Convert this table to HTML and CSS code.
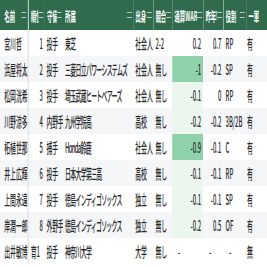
FILE: index.html
```html
<!DOCTYPE html>
<html lang="ja">
<head>
<meta charset="utf-8">
<link rel="stylesheet" href="styles.css">
</head>
<body>
<div class="frame">
<table class="grid">
  <colgroup>
    <col class="c-name"><col class="c-rank"><col class="c-pos"><col class="c-team"><col class="c-type"><col class="c-comp"><col class="c-war"><col class="c-lwar"><col class="c-role"><col class="c-one">
  </colgroup>
  <thead>
    <tr>
      <th class="name"><div class="hd"><span class="lb">名前</span><span class="srt"></span></div></th>
      <th><div class="hd"><span class="lb">順位</span><span class="srt"></span></div></th>
      <th><div class="hd"><span class="lb">守備</span><span class="srt"></span></div></th>
      <th><div class="hd"><span class="lb">所属</span><span class="srt"></span></div></th>
      <th><div class="hd"><span class="lb">出身</span><span class="srt"></span></div></th>
      <th><div class="hd"><span class="lb">競合</span><span class="srt"></span></div></th>
      <th><div class="hd"><span class="lb">通算WAR</span><span class="srt"></span></div></th>
      <th><div class="hd"><span class="lb">昨年WAR</span><span class="srt"></span></div></th>
      <th><div class="hd"><span class="lb">役割</span><span class="srt"></span></div></th>
      <th><div class="hd"><span class="lb">一軍</span></div></th>
    </tr>
  </thead>
  <tbody>
    <tr><td class="name">宮川哲</td><td class="num">1</td><td class="pos">投手</td><td class="team">東芝</td><td>社会人</td><td>2-2</td><td class="num war w0">0.2</td><td class="num">0.7</td><td>RP</td><td class="one">有</td></tr>
    <tr><td class="name">浜屋将太</td><td class="num">2</td><td class="pos">投手</td><td class="team">三菱日立パワーシステムズ</td><td>社会人</td><td>無し</td><td class="num war w2">-1</td><td class="num">-0.2</td><td>SP</td><td class="one">有</td></tr>
    <tr><td class="name">松岡洸希</td><td class="num">3</td><td class="pos">投手</td><td class="team">埼玉武蔵ヒートベアーズ</td><td>社会人</td><td>無し</td><td class="num war w1">-0.1</td><td class="num">0</td><td>RP</td><td class="one">有</td></tr>
    <tr><td class="name">川野涼多</td><td class="num">4</td><td class="pos">内野手</td><td class="team">九州学院高</td><td>高校</td><td>無し</td><td class="num war w1">-0.2</td><td class="num">-0.2</td><td>3B/2B</td><td class="one">有</td></tr>
    <tr><td class="name">柘植世那</td><td class="num">5</td><td class="pos">捕手</td><td class="team">Honda鈴鹿</td><td>社会人</td><td>無し</td><td class="num war w2">-0.9</td><td class="num">-0.1</td><td>C</td><td class="one">有</td></tr>
    <tr><td class="name">井上広輝</td><td class="num">6</td><td class="pos">投手</td><td class="team">日本大学第三高</td><td>高校</td><td>無し</td><td class="num war w1">-0.1</td><td class="num">-0.1</td><td>RP</td><td class="one">有</td></tr>
    <tr><td class="name">上間永遠</td><td class="num">7</td><td class="pos">投手</td><td class="team">徳島インディゴソックス</td><td>独立</td><td>無し</td><td class="num war w1">-0.1</td><td class="num">-0.1</td><td>SP</td><td class="one">有</td></tr>
    <tr><td class="name">岸潤一郎</td><td class="num">8</td><td class="pos">外野手</td><td class="team">徳島インディゴソックス</td><td>独立</td><td>無し</td><td class="num war w1">-0.2</td><td class="num">0.5</td><td>OF</td><td class="one">有</td></tr>
    <tr><td class="name">出井敏博</td><td>育1</td><td class="pos">投手</td><td class="team">神奈川大学</td><td>大学</td><td>無し</td><td class="war dash">-</td><td class="dash">-</td><td class="dash">-</td><td class="one">無</td></tr>
  </tbody>
</table>
</div>
</body>
</html>
```

FILE: styles.css
```css
html, body {
  margin: 0;
  padding: 0;
  background: #ffffff;
}
body {
  width: 267px;
  height: 267px;
  overflow: hidden;
  font-family: "Noto Sans CJK JP", "Noto Sans", sans-serif;
}
.frame {
  width: 636px;
  transform: scaleX(0.42);
  transform-origin: 0 0;
}
.grid {
  border-collapse: collapse;
  table-layout: fixed;
  width: 636px;
  font-size: 14px;
  font-weight: 500;
  color: #2a2a2a;
}
.c-name { width: 67px; }
.c-rank { width: 40px; }
.c-pos { width: 43px; }
.c-team { width: 167px; }
.c-type { width: 48px; }
.c-comp { width: 45px; }
.c-war { width: 74px; }
.c-lwar { width: 48px; }
.c-role { width: 54px; }
.c-one { width: 50px; }

thead th {
  background: #2f6b4c;
  color: #ffffff;
  font-weight: 700;
  font-size: 13px;
  height: 30px;
  padding: 0 3px 0 5px;
  text-align: left;
  white-space: nowrap;
  overflow: hidden;
}
thead th.name {
  border-right: 2px solid #7ba28c;
  padding-left: 10px;
}
.hd {
  display: flex;
  align-items: center;
  overflow: hidden;
}
.lb {
  overflow: hidden;
  flex: 0 1 auto;
}
.srt {
  flex: 0 0 auto;
  margin-left: auto;
  padding-left: 4px;
  width: 8px;
  height: 4px;
  border-top: 1px solid #b3cdbf;
  border-bottom: 1px solid #b3cdbf;
  background-clip: content-box;
}
tbody td {
  height: 26px;
  padding: 0 5px 0 5px;
  white-space: nowrap;
  overflow: hidden;
  line-height: 26px;
}
tbody tr:nth-child(even) td { background: #f5f6f8; }
tbody td.name {
  border-right: 2px solid #d2d4d7;
  background: #ffffff;
  padding-left: 10px;
  padding-right: 2px;
}
tbody tr:nth-child(even) td.name { background: #f5f6f8; }
tbody td.pos {
  padding-left: 4px;
  padding-right: 0;
  letter-spacing: -0.8px;
}
tbody td.team {
  letter-spacing: -1.6px;
  padding-left: 5px;
  padding-right: 0;
}
tbody td.one { padding-left: 2px; }
td.num { text-align: right; }
tbody tr td.war { background: #ffffff; }
tbody tr td.w1 { background: #eaf6ee; }
tbody tr td.w2 { background: #8fd2aa; }
tbody td.dash { padding-left: 14px; }
```
